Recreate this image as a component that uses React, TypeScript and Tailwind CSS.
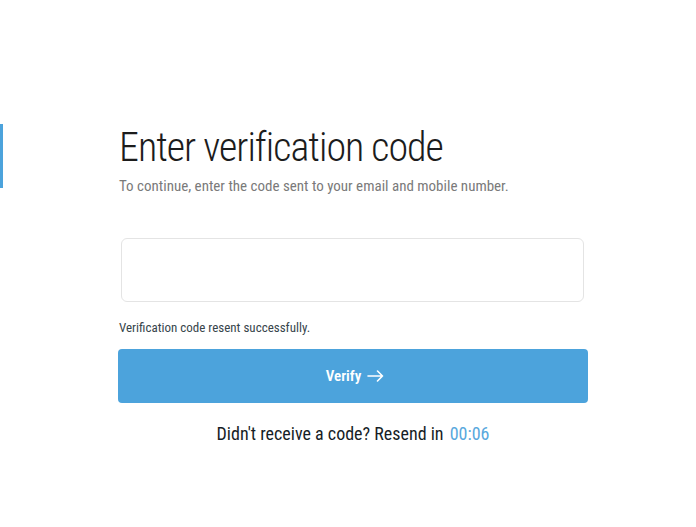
export default function App() {
  return (
    <div className="relative min-h-screen bg-white font-['Roboto_Condensed',sans-serif]">
      {/* side indicator */}
      <div className="absolute left-0 top-[124px] h-16 w-[3px] bg-[#4ca3dc]" />

      <div className="ml-[118px] w-[470px] pt-[124px]">
        <h1 className="pl-px text-[40px] font-light leading-[48px] tracking-[-0.025em] text-[#1c1c1c]">
          Enter verification code
        </h1>
        <p className="mt-[4px] pl-px text-[15px] leading-5 text-[#7a7a7a]">
          To continue, enter the code sent to your email and mobile number.
        </p>

        <div className="ml-[3px] mr-[4px] mt-[42px] h-16 rounded-md border border-[#e4e4e4]" />

        <p className="mt-[17px] pl-px text-[13px] leading-[18px] text-[#37454b]">
          Verification code resent successfully.
        </p>

        <button
          type="button"
          className="mt-[12px] flex h-[54px] w-full items-center justify-center gap-1.5 rounded bg-[#4ca3dc] pl-1 text-[15px] font-semibold text-white"
        >
          Verify
          <svg width="17" height="12" viewBox="0 0 17 12" fill="none" stroke="currentColor" strokeWidth="1.6" strokeLinecap="round" strokeLinejoin="round">
            <path d="M1 6h14.5M10.5 1l5 5-5 5" />
          </svg>
        </button>

        <p className="mt-[19px] text-center text-[18px] font-normal leading-6 text-[#161d26]">
          Didn't receive a code? Resend in{" "}
          <span className="ml-0.5 text-[#58a8dd]">00:06</span>
        </p>
      </div>
    </div>
  );
}
